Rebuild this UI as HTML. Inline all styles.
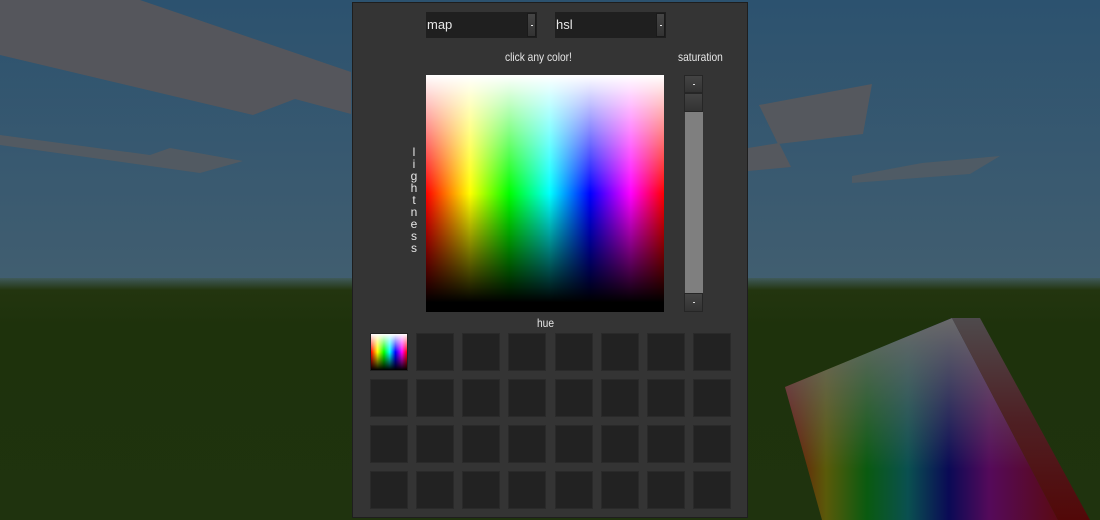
<!DOCTYPE html>
<html><head><meta charset="utf-8"><style>
*{margin:0;padding:0;box-sizing:border-box}
body{width:1100px;height:520px;overflow:hidden;position:relative;font-family:"Liberation Sans",sans-serif;background:#2c5270}
#bg{position:absolute;left:0;top:0}
.panel{position:absolute;left:352px;top:2px;width:396px;height:516px;background:#343434;border:1px solid #1e1e1e}
.dd{position:absolute;top:12px;width:111px;height:26px;background:#1f1f1f;color:#e8e8e8;font-size:13px;line-height:26px;padding-left:1px}
.dd i{position:absolute;right:1px;top:1px;width:9px;height:24px;background:linear-gradient(#454545,#333);border:1px solid #1a1a1a}
.dd i:after{content:"";position:absolute;left:3px;top:11px;width:2px;height:1px;background:#eee}
.lbl{position:absolute;color:#e6e6e6;font-size:12px;transform:scaleX(0.85);transform-origin:left top;white-space:nowrap}
.map{position:absolute;left:426px;top:75px;width:238px;height:237px;
background:linear-gradient(to bottom,rgba(0,0,0,0) 96%,#000 96%),linear-gradient(to bottom,#fff 0%,rgba(255,255,255,0) 50%,rgba(0,0,0,0) 50%,#000 96%),
linear-gradient(to right,#f00,#ff0 18.5%,#0f0 35%,#0ff 52%,#00f 69%,#f0f 86%,#f00)}
.sb{position:absolute;left:684px;width:19px;background:linear-gradient(#444,#333);border:1px solid #262626}
.cell{position:absolute;width:38px;height:38px;background:#222;border:1px solid #2a2a2a}
</style></head><body>
<svg id="bg" width="1100" height="520">
<defs>
<linearGradient id="sky" x1="0" y1="0" x2="0" y2="1"><stop offset="0" stop-color="#2c526f"/><stop offset="0.54" stop-color="#415e70"/></linearGradient>
<linearGradient id="gr" x1="0" y1="0" x2="0" y2="1"><stop offset="0" stop-color="#3f5a5a"/><stop offset="0.05" stop-color="#23350f"/><stop offset="0.2" stop-color="#1e320c"/><stop offset="1" stop-color="#1f330e"/></linearGradient>
<linearGradient id="blk" x1="0" y1="0" x2="1" y2="0"><stop offset="0" stop-color="#6a0a0a"/><stop offset="0.15" stop-color="#5a5a0a"/><stop offset="0.3" stop-color="#0a5a10"/><stop offset="0.45" stop-color="#0a5050"/><stop offset="0.6" stop-color="#0a0a55"/><stop offset="0.75" stop-color="#550a5a"/><stop offset="1" stop-color="#5a0a14"/></linearGradient>
<linearGradient id="fade" x1="0" y1="0" x2="0" y2="1"><stop offset="0" stop-color="#6a6a6a" stop-opacity="1"/><stop offset="0.75" stop-color="#6a6a6a" stop-opacity="0"/></linearGradient>
<linearGradient id="side" x1="0" y1="0" x2="0" y2="1"><stop offset="0" stop-color="#4e4a4c"/><stop offset="0.5" stop-color="#4e2024"/><stop offset="1" stop-color="#520808"/></linearGradient>
</defs>
<rect width="1100" height="520" fill="url(#sky)"/>
<rect y="278" width="1100" height="242" fill="url(#gr)"/>
<polygon points="0,0 140,0 351,72 351,114 295,99 253,115 0,55" fill="#55565c"/>
<polygon points="0,135 150,155 170,148 243,161 200,173 0,145" fill="#525a62"/>
<polygon points="759,105 872,84 863,134 778,144" fill="#55585e"/>
<polygon points="748,148 779,143 791,167 748,171" fill="#55585e"/>
<polygon points="852,176 922,163 1000,156 970,174 852,183" fill="#4f5b65"/>
<polygon points="785,387 952,318 1058,520 822,520" fill="url(#blk)"/>
<polygon points="785,387 952,318 1058,520 822,520" fill="url(#fade)"/>
<polygon points="952,318 980,318 1090,520 1058,520" fill="url(#side)"/>
</svg>
<div class="panel"></div>
<div class="dd" style="left:426px">map<i></i></div>
<div class="dd" style="left:555px">hsl<i></i></div>
<div class="lbl" style="left:505px;top:50px">click any color!</div>
<div class="lbl" style="left:678px;top:50px">saturation</div>
<div class="lbl" style="left:537px;top:316px">hue</div>
<div style="position:absolute;left:409px;top:146px;width:10px;text-align:center;line-height:12px;font-size:12px;color:#e6e6e6">l<br>i<br>g<br>h<br>t<br>n<br>e<br>s<br>s</div>
<div class="map"></div>
<div class="sb" style="top:75px;height:18px"><div style="position:absolute;left:8px;top:8px;width:2px;height:1px;background:#ddd"></div></div>
<div class="sb" style="top:93px;height:19px"></div>
<div style="position:absolute;left:685px;top:112px;width:18px;height:181px;background:#7f7f7f"></div>
<div class="sb" style="top:293px;height:19px"><div style="position:absolute;left:8px;top:8px;width:2px;height:1px;background:#ddd"></div></div>
<div id="grid"></div>
<script>
var g=document.getElementById('grid'),xs=[370,416,462,508,555,601,647,693],ys=[333,379,425,471],h='';
ys.forEach(function(y,r){xs.forEach(function(x,c){
var s=(r==0&&c==0)?'background:linear-gradient(to bottom,#fff 0%,rgba(255,255,255,0) 50%,rgba(0,0,0,0) 50%,#000 100%),linear-gradient(to right,#f00,#ff0 18%,#0f0 36%,#0ff 52%,#00f 68%,#f0f 86%,#f00);border-color:#222':'';
h+='<div class="cell" style="left:'+x+'px;top:'+y+'px;'+s+'"></div>';});});
g.innerHTML=h;
</script>
</body></html>
